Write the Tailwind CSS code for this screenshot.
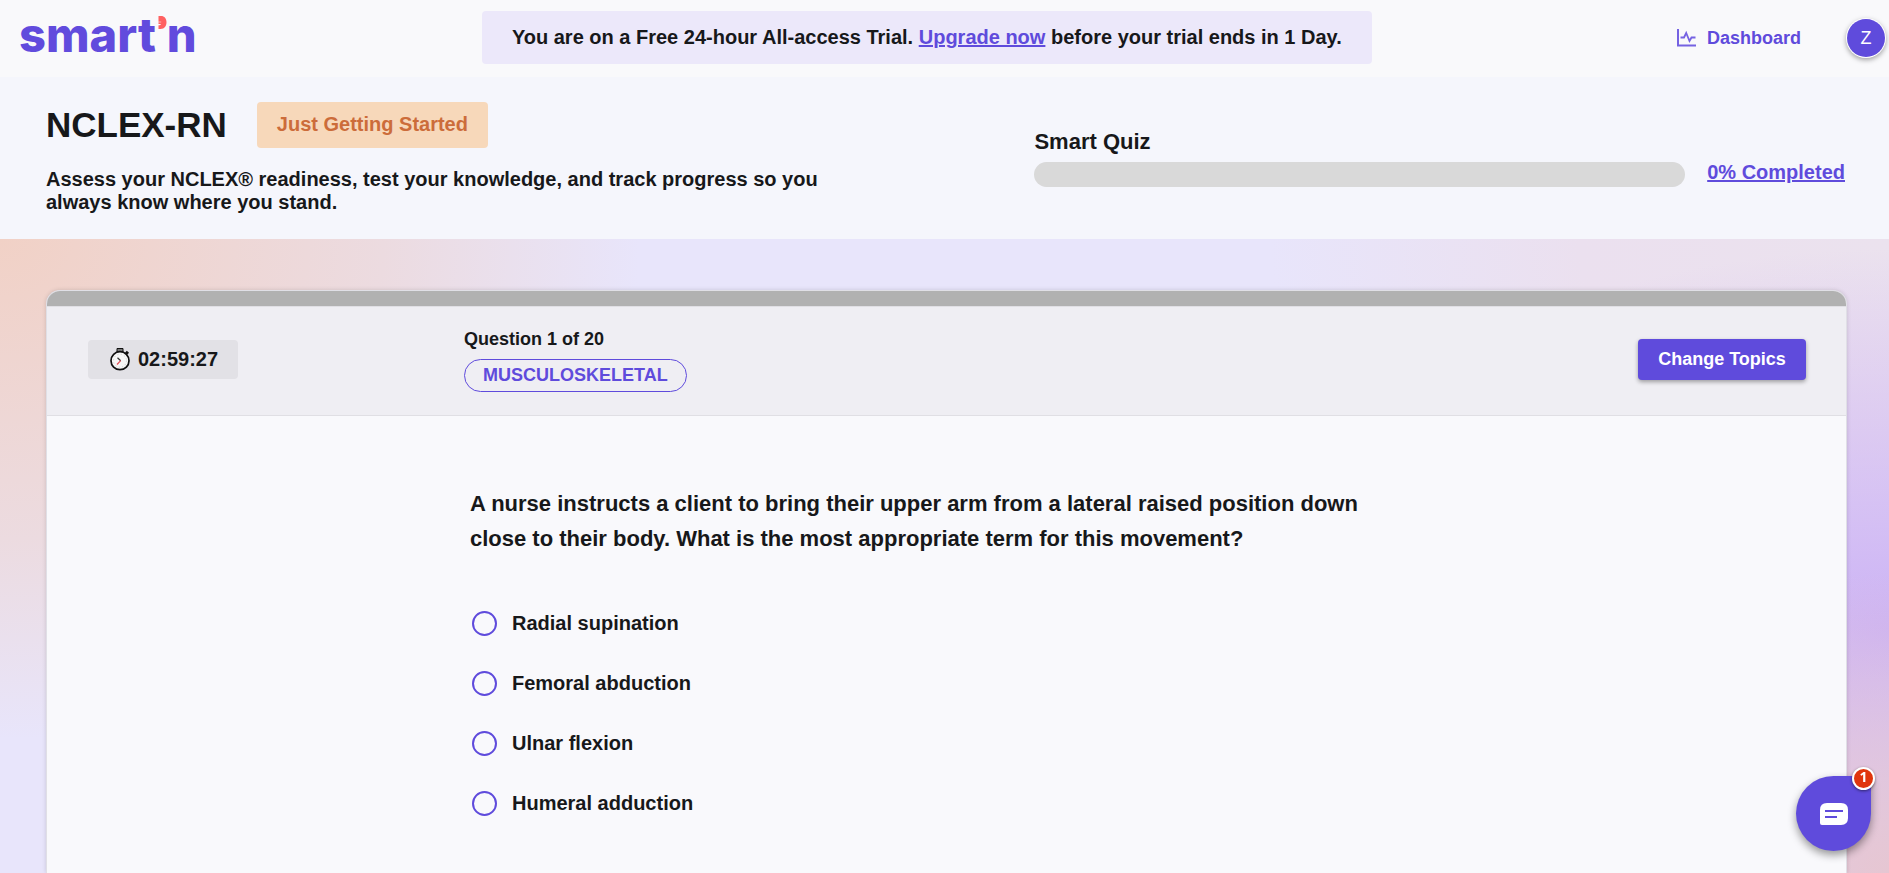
<!DOCTYPE html>
<html lang="en">
<head>
<meta charset="utf-8">
<meta name="viewport" content="width=device-width, initial-scale=1">
<title>NCLEX-RN Smart Quiz</title>
<script src="https://cdn.jsdelivr.net/npm/@tailwindcss/browser@4"></script>
</head>
<body class="flex min-h-screen flex-col bg-[#f9f9fc] font-['Liberation_Sans',Arial,sans-serif] font-bold text-[#17181a]">

<header class="flex h-[77px] items-center justify-between bg-[#f9f9fb] pr-1 pb-0.5 pl-[19px]">
  <a href="#" aria-label="smart'n home" class="flex items-center pb-1.5 font-['Inter',sans-serif] text-[47px] leading-[60px] font-extrabold text-[#614bdd]">
    <span>smart</span>
    <svg class="mb-6 ml-0.5 h-[13px] w-[9px] shrink-0" viewBox="0 0 9 13" aria-hidden="true"><path d="M0.500 0H3C6.500 0 8.500 2.600 8.500 6.300C8.500 10 6.500 13 2.600 13H0.500V9.200C1.500 9.300 2.800 9 3 8H0.500V6.300H3.200V5.700H0.500Z" fill="#ff6161"/></svg>
    <span>n</span>
  </a>
  <p class="mr-[20px] flex h-[53px] items-center rounded bg-[#ece8fa] px-[30px] pb-0.5 text-xl"><span>You are on a Free 24-hour All-access Trial. <a href="#" class="text-[#5f4bdc] underline">Upgrade now</a> before your trial ends in 1 Day.</span></p>
  <nav class="flex items-center gap-[46px]">
    <a href="#" class="flex items-center gap-[11px] text-lg text-[#5f4bdc]">
      <svg class="h-[18px] w-[19px]" viewBox="0 0 19 18" fill="none" stroke="#7562e2" stroke-width="2" aria-hidden="true"><path d="M1 0V16.500H19"/><path d="M3.500 8.500H7L9.200 4L12.500 12L14.500 8.500H18.500" stroke-width="1.800"/></svg>
      Dashboard
    </a>
    <button type="button" class="size-[38px] rounded-full bg-[#5f4bdc] text-lg font-normal text-white shadow-[0_0_0_1px_#fff,0_2px_5px_1px_rgba(0,0,0,0.35)]">Z</button>
  </nav>
</header>

<section class="grid h-[162px] grid-cols-[989fr_811fr] bg-[#f5f6fc] pr-11 pl-[46px]">
  <div class="pt-[25px]">
    <div class="flex items-center gap-[30px]">
      <h1 class="text-[35px] leading-[46px]">NCLEX-RN</h1>
      <span class="rounded bg-[#f7d8ba] px-5 pb-0.5 text-xl leading-[44px] text-[#cc6c3a]">Just Getting Started</span>
    </div>
    <p class="mt-5 max-w-[800px] text-xl leading-[23px]">Assess your NCLEX® readiness, test your knowledge, and track progress so you always know where you stand.</p>
  </div>
  <div class="flex items-end gap-[22px] self-start pt-[51px]">
    <div class="flex-1">
      <h2 class="text-[22px] leading-[28px]" id="quiz">Smart Quiz</h2>
      <div role="progressbar" aria-labelledby="quiz" aria-valuenow="0" aria-valuemin="0" aria-valuemax="100" class="mt-1.5 h-[25px] rounded-full bg-[#d9d9d9]"></div>
    </div>
    <a href="#" class="text-xl leading-[30px] text-[#5f4bdc] underline">0% Completed</a>
  </div>
</section>

<main class="flex flex-1 flex-col bg-[#e8e5fb] bg-[radial-gradient(640px_500px_at_0_0,#f1d1c6,#ecdbe0_60%,#e8e5fb00),radial-gradient(420px_300px_at_100%_100%,#e6c6d2,#e6c6d200),radial-gradient(620px_380px_at_100%_390px,#ccb2f4,#ccb2f400),radial-gradient(620px_400px_at_100%_0,#ebe2ee,#ebe0ef_50%,#e8e5fb00)] pt-[51px] pr-[42px] pl-[46px]">
  <article class="flex flex-1 flex-col overflow-hidden rounded-t-[14px] border border-b-0 border-[#e0dfe6] bg-[#f9f9fc] shadow-[0_0_4px_rgba(0,0,0,0.15)]">
    <div class="h-[15px] bg-[#b1b1b1]"></div>
    <header class="flex h-[110px] items-center border-y border-[#e0dfe4] bg-[#efeef3] pr-10 pb-1 pl-[41px]">
      <div class="flex h-[39px] w-[150px] items-center gap-2 rounded bg-[#e2e1e6] pl-[22px] text-xl">
        <svg class="h-6 w-5 shrink-0" viewBox="0 0 20 24" aria-hidden="true">
          <path d="M7 1.500H13V5H7Z" fill="#777" stroke="#111"/>
          <path d="M15.800 4.800L18 6.800" stroke="#111" stroke-width="3"/>
          <circle cx="10" cy="13.700" r="9" fill="#f7f7f7" stroke="#111" stroke-width="1.700"/>
          <circle cx="10" cy="13.700" r="6.500" fill="none" stroke="#ccc" stroke-dasharray="1 2.400"/>
          <path d="M7.500 10.800L10.700 13.700" stroke="#333" stroke-width="1.200"/><path d="M10.700 13.700L7 17.500" stroke="#e34b55" stroke-width="1.200"/>
        </svg>
        <time>02:59:27</time>
      </div>
      <div class="ml-[226px] flex flex-col items-start gap-2">
        <p class="text-lg leading-6">Question 1 of 20</p>
        <span class="rounded-full border border-[#5f4bdc] px-[18px] text-lg leading-[31px] text-[#5f4bdc]">MUSCULOSKELETAL</span>
      </div>
      <button type="button" class="ml-auto h-[41px] w-[168px] rounded bg-[#5f4bdc] text-lg text-white shadow-[0_2px_4px_rgba(0,0,0,0.35)]">Change Topics</button>
    </header>
    <form class="ml-[423px] pt-[70px]">
      <fieldset>
        <legend class="max-w-[915px] text-[22px] leading-[35px]">A nurse instructs a client to bring their upper arm from a lateral raised position down close to their body. What is the most appropriate term for this movement?</legend>
        <div class="ml-[2px] flex flex-col items-start pt-[37px] text-xl">
          <label class="flex h-[60px] items-center gap-[15px]"><input type="radio" name="answer" class="size-[25px] appearance-none rounded-full border-2 border-[#5f4bdc] checked:bg-[#5f4bdc]">Radial supination</label>
          <label class="flex h-[60px] items-center gap-[15px]"><input type="radio" name="answer" class="size-[25px] appearance-none rounded-full border-2 border-[#5f4bdc] checked:bg-[#5f4bdc]">Femoral abduction</label>
          <label class="flex h-[60px] items-center gap-[15px]"><input type="radio" name="answer" class="size-[25px] appearance-none rounded-full border-2 border-[#5f4bdc] checked:bg-[#5f4bdc]">Ulnar flexion</label>
          <label class="flex h-[60px] items-center gap-[15px]"><input type="radio" name="answer" class="size-[25px] appearance-none rounded-full border-2 border-[#5f4bdc] checked:bg-[#5f4bdc]">Humeral adduction</label>
        </div>
      </fieldset>
    </form>
  </article>
</main>

<button type="button" aria-label="Open chat, 1 new message" class="fixed right-[18px] bottom-[22px] flex size-[75px] items-center justify-center rounded-full rounded-tr-none bg-[#5f4bdc] shadow-[0_4px_8px_rgba(0,0,0,0.4)]">
  <svg class="h-[22px] w-7" viewBox="0 0 28 22" aria-hidden="true"><path d="M7 0H21Q28 0 28 7V15Q28 22 21 22H2Q0 22 0 20V7Q0 0 7 0Z" fill="#fff"/><path d="M5 8H23M5 14H17" stroke="#5f4bdc" stroke-width="2"/></svg>
  <span class="absolute -top-[9px] -right-1 flex size-[23px] items-center justify-center rounded-full border-2 border-white bg-[#e0350d] pb-1 font-['Open_Sans',sans-serif] text-sm leading-none text-white shadow-[0_1px_3px_rgba(0,0,0,0.5)]">1</span>
</button>
</body>
</html>
